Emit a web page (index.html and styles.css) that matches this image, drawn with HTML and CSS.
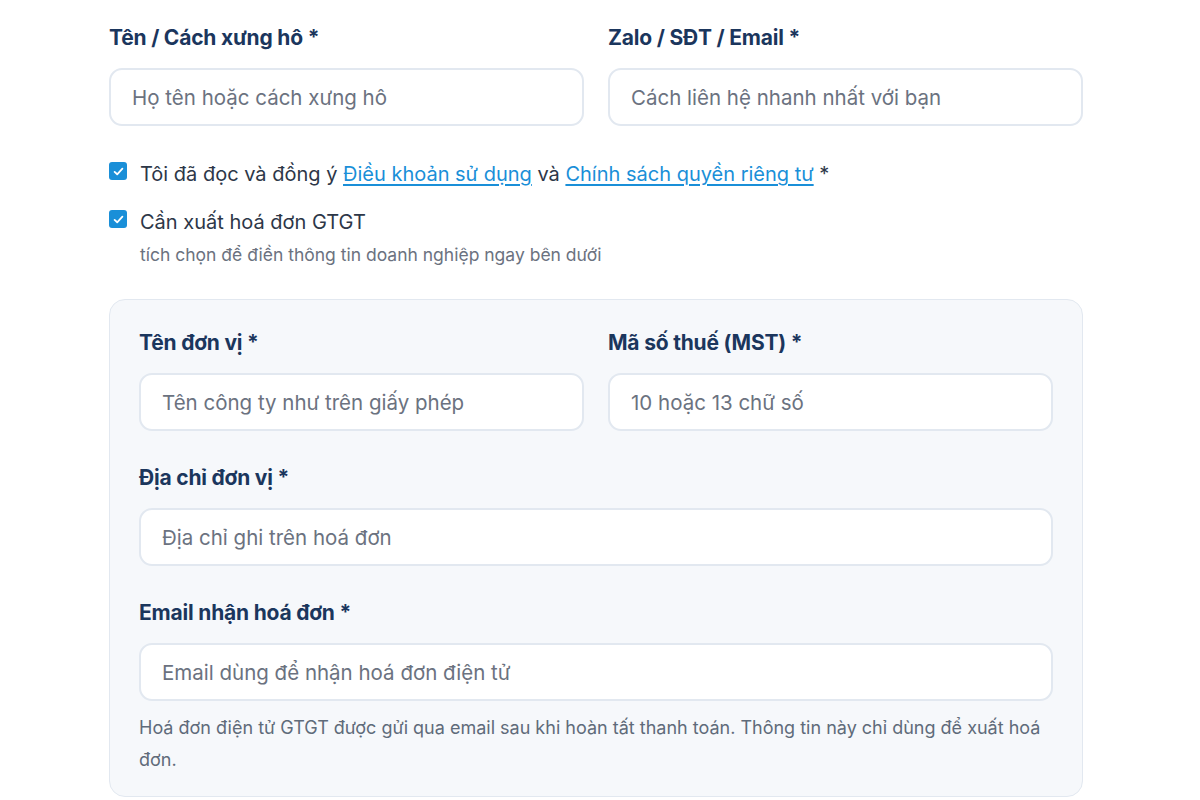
FILE: index.html
```html
<!DOCTYPE html>
<html lang="vi">
<head>
    <meta charset="UTF-8">
    <meta name="viewport" content="width=device-width, initial-scale=1.0">
    <title>Thông tin đặt hàng</title>
    <link rel="stylesheet" href="styles.css">
</head>
<body>

    <form class="order-form">

        <!-- Contact info -->
        <div class="row">
            <div class="field">
                <label class="field-label">Tên / Cách xưng hô *</label>
                <input type="text" placeholder="Họ tên hoặc cách xưng hô">
            </div>
            <div class="field">
                <label class="field-label">Zalo / SĐT / Email *</label>
                <input type="text" placeholder="Cách liên hệ nhanh nhất với bạn">
            </div>
        </div>

        <!-- Agreements -->
        <div class="checks">
            <label class="check">
                <span class="box"><svg viewBox="0 0 16 16" width="13" height="13"><path d="M3.2 8.4 6.4 11.4 12.8 4.6" fill="none" stroke="#fff" stroke-width="2.2" stroke-linecap="round" stroke-linejoin="round"/></svg></span>
                <span class="check-text">Tôi đã đọc và đồng ý <a href="#">Điều khoản sử dụng</a> và <a href="#">Chính sách quyền riêng tư</a> *</span>
            </label>
            <label class="check">
                <span class="box"><svg viewBox="0 0 16 16" width="13" height="13"><path d="M3.2 8.4 6.4 11.4 12.8 4.6" fill="none" stroke="#fff" stroke-width="2.2" stroke-linecap="round" stroke-linejoin="round"/></svg></span>
                <span class="check-text">Cần xuất hoá đơn GTGT
                    <small class="hint">tích chọn để điền thông tin doanh nghiệp ngay bên dưới</small>
                </span>
            </label>
        </div>

        <!-- Invoice panel -->
        <div class="invoice-box">
            <div class="row">
                <div class="field">
                    <label class="field-label">Tên đơn vị *</label>
                    <input type="text" placeholder="Tên công ty như trên giấy phép">
                </div>
                <div class="field">
                    <label class="field-label">Mã số thuế (MST) *</label>
                    <input type="text" placeholder="10 hoặc 13 chữ số">
                </div>
            </div>
            <div class="field">
                <label class="field-label">Địa chỉ đơn vị *</label>
                <input type="text" placeholder="Địa chỉ ghi trên hoá đơn">
            </div>
            <div class="field">
                <label class="field-label">Email nhận hoá đơn *</label>
                <input type="email" placeholder="Email dùng để nhận hoá đơn điện tử">
            </div>
            <p class="note">Hoá đơn điện tử GTGT được gửi qua email sau khi hoàn tất thanh toán. Thông tin này chỉ dùng để xuất hoá đơn.</p>
        </div>

    </form>

</body>
</html>
```

FILE: styles.css
```css
body {
    font-family: Inter, "Noto Sans", sans-serif;
    background: #fff;
    color: #334155;
    margin: 0;
    padding: 0;
}
.order-form {
    width: 974px;
    margin: 0 0 0 109px;
    padding-top: 22px;
}
.row {
    display: flex;
    gap: 24px;
}
.row .field { flex: 1; }

.field {
    display: flex;
    flex-direction: column;
    gap: 14px;
}
.field-label {
    font-size: 21px;
    font-weight: 700;
    color: #1b365d; /* Navy */
    line-height: 32px;
    letter-spacing: -0.2px;
}
input {
    height: 58px;
    box-sizing: border-box;
    padding: 0 21px;
    font-family: inherit;
    font-size: 20.5px;
    color: #334155;
    background: #fff;
    border: 2px solid #e2e8f0;
    border-radius: 13px;
    outline: none;
}
input::placeholder { color: #6b7280; }

/* Checkbox rows */
.checks {
    margin-top: 32px;
    display: flex;
    flex-direction: column;
    gap: 16px;
}
.check {
    display: flex;
    align-items: flex-start;
    gap: 13px;
    font-size: 20px;
    line-height: 32px;
    color: #2d3748;
}
.box {
    width: 18px;
    height: 18px;
    margin-top: 4px;
    flex: none;
    background: #1a8fd8;
    border-radius: 3px;
    display: flex;
    align-items: center;
    justify-content: center;
}
.check-text a {
    color: #1a8fd8;
    text-decoration: underline;
    text-underline-offset: 3px;
}
.hint {
    display: block;
    font-size: 17.5px;
    color: #6b7280;
    line-height: 22px;
    margin-top: 6px;
}

/* Invoice panel */
.invoice-box {
    margin-top: 33px;
    background: #f6f8fb;
    border: 1.5px solid #e2e8f0;
    border-radius: 16px;
    padding: 27px 29px 20px;
    display: flex;
    flex-direction: column;
    gap: 31px;
}
.note {
    margin: -20px 0 0;
    font-size: 18px;
    line-height: 32px;
    color: #5f6b7a;
}
```
